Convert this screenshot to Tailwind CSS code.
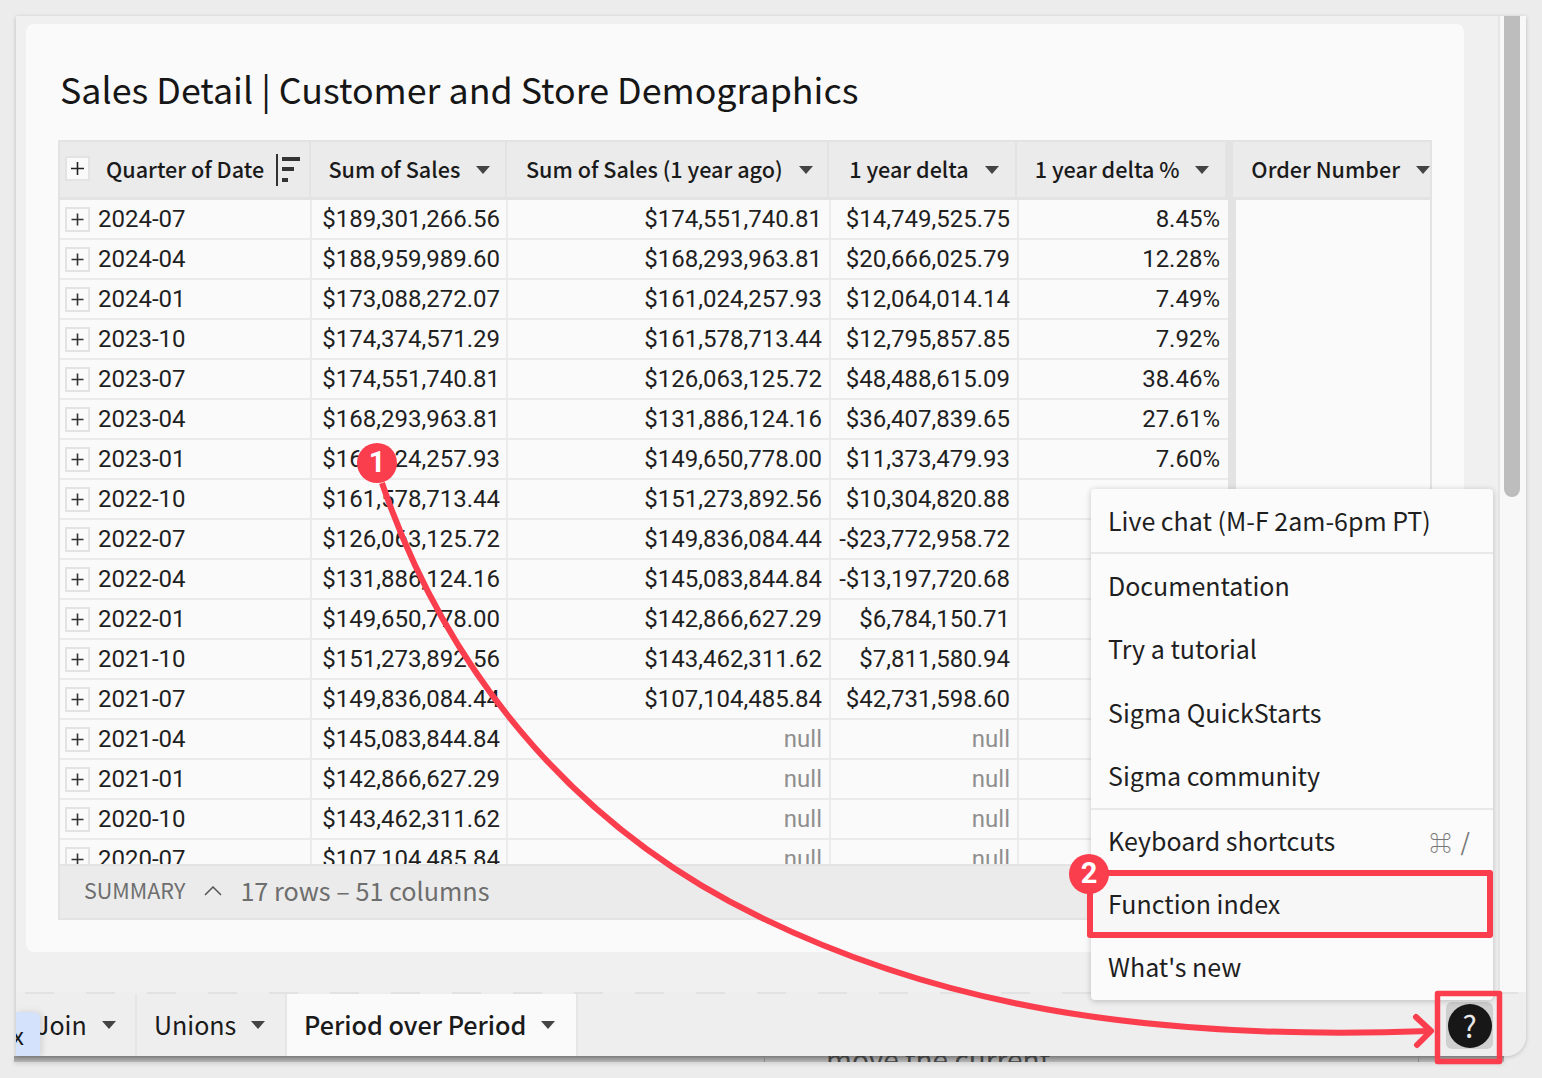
<!DOCTYPE html>
<html lang="en">
<head>
    <meta charset="UTF-8">
    <title>Sales Detail</title>
    <script src="https://cdn.jsdelivr.net/npm/@tailwindcss/browser@4"></script>
</head>
<body class="relative w-[1542px] h-[1078px] overflow-hidden bg-[#ececec] font-['Noto_Sans_CJK_SC','Noto_Sans',sans-serif] text-[#1a1a1a]">

<!-- page text peeking out below the window -->
<div class="absolute left-[14px] top-[1056px] h-[6px] w-[1490px] overflow-hidden bg-gradient-to-b from-[#8f8f8f] to-[#b5b5b5] shadow-[0_2px_4px_rgba(0,0,0,0.12)]">
    <div class="absolute left-[750px] top-0 h-[6px] w-px bg-[#888]"></div>
    <div class="absolute left-[1404px] top-0 h-[6px] w-px bg-[#888]"></div>
    <div class="absolute left-[812px] -top-[18px] whitespace-nowrap text-[28px] leading-[40px] text-[#444]">move the current</div>
</div>

<!-- app window -->
<div class="relative ml-4 mt-4 w-[1510px] h-[1040px] overflow-hidden rounded-br-[20px] bg-[#f0f0f0] shadow-[0_1px_4px_rgba(0,0,0,0.2)]">
    <div class="flex h-[976px]">
        <div class="w-[1482px] pl-[10px] pt-2">
            <section class="w-[1438px] h-[928px] rounded-lg bg-[#fafafa] pt-[33px] pl-[32px]">
                <h1 class="ml-[2px] h-[83px] text-[35.800px] leading-[62px] text-[#161616]">Sales Detail | Customer and Store Demographics</h1>

                <div class="relative w-[1374px] h-[780px] overflow-hidden border-2 border-[#e3e3e3]">
                    <!-- header -->
                    <div class="flex h-[58px] whitespace-nowrap border-b-[3px] border-[#e3e3e3] bg-[#ebebeb] text-[21.600px] font-medium">
                        <div class="flex w-[252px] items-center border-r-2 border-[#e3e3e3] pl-[5px]">
                            <span class="mb-[3px] flex h-[25px] w-[25px] items-center justify-center border-2 border-[#e3e3e3] bg-[#fafafa]"><svg width="15" height="15" viewBox="0 0 15 15"><path d="M7.500 1v13M1 7.500h13" stroke="#222" stroke-width="1.600"/></svg></span>
                            <span class="ml-[16px]">Quarter of Date</span>
                            <svg class="ml-[12px]" width="26" height="34" viewBox="0 0 26 34"><path d="M1 1v32" stroke="#333" stroke-width="2"/><path d="M6 4h18v4H6zM6 14h12v4H6zM6 25h6v4H6z" fill="#333"/></svg>
                        </div>
                        <div class="flex w-[196px] items-center border-r-2 border-[#e3e3e3] pl-[17px]"><span>Sum of Sales</span><svg class="ml-[16px]" width="14" height="8"><path d="M0 0h14L7 8z" fill="#444"/></svg></div>
                        <div class="flex w-[323px] items-center border-r-2 border-[#e3e3e3] pl-[19px]"><span>Sum of Sales (1 year ago)</span><svg class="ml-[16px]" width="14" height="8"><path d="M0 0h14L7 8z" fill="#444"/></svg></div>
                        <div class="flex w-[188px] items-center border-r-2 border-[#e3e3e3] pl-[20px]"><span>1 year delta</span><svg class="ml-[16px]" width="14" height="8"><path d="M0 0h14L7 8z" fill="#444"/></svg></div>
                        <div class="flex w-[209px] items-center pl-[18px]"><span>1 year delta %</span><svg class="ml-[16px]" width="14" height="8"><path d="M0 0h14L7 8z" fill="#444"/></svg></div>
                        <div class="-mb-[3px] w-2 shrink-0 bg-[#e3e3e3]"></div>
                        <div class="flex flex-1 items-center pl-[18px]"><span>Order Number</span><svg class="ml-[16px]" width="14" height="8"><path d="M0 0h14L7 8z" fill="#444"/></svg></div>
                    </div>

                    <!-- rows -->
                    <div class="flex font-['Roboto',sans-serif] text-[24px] leading-[38px] text-[#1f1f1f]">
                        <div class="w-[1168px]">
                            <div class="flex h-10 border-b-2 border-[#ebebeb]"><div class="flex w-[252px] items-center border-r-2 border-[#ebebeb] pl-[5px]"><span class="flex h-[25px] w-[25px] items-center justify-center border-2 border-[#e3e3e3]"><svg width="15" height="15" viewBox="0 0 15 15"><path d="M7.500 1.500v12M1.500 7.500h12" stroke="#333" stroke-width="1.600"/></svg></span><span class="ml-[8px]">2024-07</span></div><div class="w-[196px] border-r-2 border-[#ebebeb] pr-[6px] text-right">$189,301,266.56</div><div class="w-[323px] border-r-2 border-[#ebebeb] pr-[7px] text-right">$174,551,740.81</div><div class="w-[188px] border-r-2 border-[#ebebeb] pr-[7px] text-right">$14,749,525.75</div><div class="w-[209px] pr-[8px] text-right">8.45%</div></div>
                            <div class="flex h-10 border-b-2 border-[#ebebeb]"><div class="flex w-[252px] items-center border-r-2 border-[#ebebeb] pl-[5px]"><span class="flex h-[25px] w-[25px] items-center justify-center border-2 border-[#e3e3e3]"><svg width="15" height="15" viewBox="0 0 15 15"><path d="M7.500 1.500v12M1.500 7.500h12" stroke="#333" stroke-width="1.600"/></svg></span><span class="ml-[8px]">2024-04</span></div><div class="w-[196px] border-r-2 border-[#ebebeb] pr-[6px] text-right">$188,959,989.60</div><div class="w-[323px] border-r-2 border-[#ebebeb] pr-[7px] text-right">$168,293,963.81</div><div class="w-[188px] border-r-2 border-[#ebebeb] pr-[7px] text-right">$20,666,025.79</div><div class="w-[209px] pr-[8px] text-right">12.28%</div></div>
                            <div class="flex h-10 border-b-2 border-[#ebebeb]"><div class="flex w-[252px] items-center border-r-2 border-[#ebebeb] pl-[5px]"><span class="flex h-[25px] w-[25px] items-center justify-center border-2 border-[#e3e3e3]"><svg width="15" height="15" viewBox="0 0 15 15"><path d="M7.500 1.500v12M1.500 7.500h12" stroke="#333" stroke-width="1.600"/></svg></span><span class="ml-[8px]">2024-01</span></div><div class="w-[196px] border-r-2 border-[#ebebeb] pr-[6px] text-right">$173,088,272.07</div><div class="w-[323px] border-r-2 border-[#ebebeb] pr-[7px] text-right">$161,024,257.93</div><div class="w-[188px] border-r-2 border-[#ebebeb] pr-[7px] text-right">$12,064,014.14</div><div class="w-[209px] pr-[8px] text-right">7.49%</div></div>
                            <div class="flex h-10 border-b-2 border-[#ebebeb]"><div class="flex w-[252px] items-center border-r-2 border-[#ebebeb] pl-[5px]"><span class="flex h-[25px] w-[25px] items-center justify-center border-2 border-[#e3e3e3]"><svg width="15" height="15" viewBox="0 0 15 15"><path d="M7.500 1.500v12M1.500 7.500h12" stroke="#333" stroke-width="1.600"/></svg></span><span class="ml-[8px]">2023-10</span></div><div class="w-[196px] border-r-2 border-[#ebebeb] pr-[6px] text-right">$174,374,571.29</div><div class="w-[323px] border-r-2 border-[#ebebeb] pr-[7px] text-right">$161,578,713.44</div><div class="w-[188px] border-r-2 border-[#ebebeb] pr-[7px] text-right">$12,795,857.85</div><div class="w-[209px] pr-[8px] text-right">7.92%</div></div>
                            <div class="flex h-10 border-b-2 border-[#ebebeb]"><div class="flex w-[252px] items-center border-r-2 border-[#ebebeb] pl-[5px]"><span class="flex h-[25px] w-[25px] items-center justify-center border-2 border-[#e3e3e3]"><svg width="15" height="15" viewBox="0 0 15 15"><path d="M7.500 1.500v12M1.500 7.500h12" stroke="#333" stroke-width="1.600"/></svg></span><span class="ml-[8px]">2023-07</span></div><div class="w-[196px] border-r-2 border-[#ebebeb] pr-[6px] text-right">$174,551,740.81</div><div class="w-[323px] border-r-2 border-[#ebebeb] pr-[7px] text-right">$126,063,125.72</div><div class="w-[188px] border-r-2 border-[#ebebeb] pr-[7px] text-right">$48,488,615.09</div><div class="w-[209px] pr-[8px] text-right">38.46%</div></div>
                            <div class="flex h-10 border-b-2 border-[#ebebeb]"><div class="flex w-[252px] items-center border-r-2 border-[#ebebeb] pl-[5px]"><span class="flex h-[25px] w-[25px] items-center justify-center border-2 border-[#e3e3e3]"><svg width="15" height="15" viewBox="0 0 15 15"><path d="M7.500 1.500v12M1.500 7.500h12" stroke="#333" stroke-width="1.600"/></svg></span><span class="ml-[8px]">2023-04</span></div><div class="w-[196px] border-r-2 border-[#ebebeb] pr-[6px] text-right">$168,293,963.81</div><div class="w-[323px] border-r-2 border-[#ebebeb] pr-[7px] text-right">$131,886,124.16</div><div class="w-[188px] border-r-2 border-[#ebebeb] pr-[7px] text-right">$36,407,839.65</div><div class="w-[209px] pr-[8px] text-right">27.61%</div></div>
                            <div class="flex h-10 border-b-2 border-[#ebebeb]"><div class="flex w-[252px] items-center border-r-2 border-[#ebebeb] pl-[5px]"><span class="flex h-[25px] w-[25px] items-center justify-center border-2 border-[#e3e3e3]"><svg width="15" height="15" viewBox="0 0 15 15"><path d="M7.500 1.500v12M1.500 7.500h12" stroke="#333" stroke-width="1.600"/></svg></span><span class="ml-[8px]">2023-01</span></div><div class="w-[196px] border-r-2 border-[#ebebeb] pr-[6px] text-right">$161,024,257.93</div><div class="w-[323px] border-r-2 border-[#ebebeb] pr-[7px] text-right">$149,650,778.00</div><div class="w-[188px] border-r-2 border-[#ebebeb] pr-[7px] text-right">$11,373,479.93</div><div class="w-[209px] pr-[8px] text-right">7.60%</div></div>
                            <div class="flex h-10 border-b-2 border-[#ebebeb]"><div class="flex w-[252px] items-center border-r-2 border-[#ebebeb] pl-[5px]"><span class="flex h-[25px] w-[25px] items-center justify-center border-2 border-[#e3e3e3]"><svg width="15" height="15" viewBox="0 0 15 15"><path d="M7.500 1.500v12M1.500 7.500h12" stroke="#333" stroke-width="1.600"/></svg></span><span class="ml-[8px]">2022-10</span></div><div class="w-[196px] border-r-2 border-[#ebebeb] pr-[6px] text-right">$161,578,713.44</div><div class="w-[323px] border-r-2 border-[#ebebeb] pr-[7px] text-right">$151,273,892.56</div><div class="w-[188px] border-r-2 border-[#ebebeb] pr-[7px] text-right">$10,304,820.88</div><div class="w-[209px]"></div></div>
                            <div class="flex h-10 border-b-2 border-[#ebebeb]"><div class="flex w-[252px] items-center border-r-2 border-[#ebebeb] pl-[5px]"><span class="flex h-[25px] w-[25px] items-center justify-center border-2 border-[#e3e3e3]"><svg width="15" height="15" viewBox="0 0 15 15"><path d="M7.500 1.500v12M1.500 7.500h12" stroke="#333" stroke-width="1.600"/></svg></span><span class="ml-[8px]">2022-07</span></div><div class="w-[196px] border-r-2 border-[#ebebeb] pr-[6px] text-right">$126,063,125.72</div><div class="w-[323px] border-r-2 border-[#ebebeb] pr-[7px] text-right">$149,836,084.44</div><div class="w-[188px] border-r-2 border-[#ebebeb] pr-[7px] text-right">-$23,772,958.72</div><div class="w-[209px]"></div></div>
                            <div class="flex h-10 border-b-2 border-[#ebebeb]"><div class="flex w-[252px] items-center border-r-2 border-[#ebebeb] pl-[5px]"><span class="flex h-[25px] w-[25px] items-center justify-center border-2 border-[#e3e3e3]"><svg width="15" height="15" viewBox="0 0 15 15"><path d="M7.500 1.500v12M1.500 7.500h12" stroke="#333" stroke-width="1.600"/></svg></span><span class="ml-[8px]">2022-04</span></div><div class="w-[196px] border-r-2 border-[#ebebeb] pr-[6px] text-right">$131,886,124.16</div><div class="w-[323px] border-r-2 border-[#ebebeb] pr-[7px] text-right">$145,083,844.84</div><div class="w-[188px] border-r-2 border-[#ebebeb] pr-[7px] text-right">-$13,197,720.68</div><div class="w-[209px]"></div></div>
                            <div class="flex h-10 border-b-2 border-[#ebebeb]"><div class="flex w-[252px] items-center border-r-2 border-[#ebebeb] pl-[5px]"><span class="flex h-[25px] w-[25px] items-center justify-center border-2 border-[#e3e3e3]"><svg width="15" height="15" viewBox="0 0 15 15"><path d="M7.500 1.500v12M1.500 7.500h12" stroke="#333" stroke-width="1.600"/></svg></span><span class="ml-[8px]">2022-01</span></div><div class="w-[196px] border-r-2 border-[#ebebeb] pr-[6px] text-right">$149,650,778.00</div><div class="w-[323px] border-r-2 border-[#ebebeb] pr-[7px] text-right">$142,866,627.29</div><div class="w-[188px] border-r-2 border-[#ebebeb] pr-[7px] text-right">$6,784,150.71</div><div class="w-[209px]"></div></div>
                            <div class="flex h-10 border-b-2 border-[#ebebeb]"><div class="flex w-[252px] items-center border-r-2 border-[#ebebeb] pl-[5px]"><span class="flex h-[25px] w-[25px] items-center justify-center border-2 border-[#e3e3e3]"><svg width="15" height="15" viewBox="0 0 15 15"><path d="M7.500 1.500v12M1.500 7.500h12" stroke="#333" stroke-width="1.600"/></svg></span><span class="ml-[8px]">2021-10</span></div><div class="w-[196px] border-r-2 border-[#ebebeb] pr-[6px] text-right">$151,273,892.56</div><div class="w-[323px] border-r-2 border-[#ebebeb] pr-[7px] text-right">$143,462,311.62</div><div class="w-[188px] border-r-2 border-[#ebebeb] pr-[7px] text-right">$7,811,580.94</div><div class="w-[209px]"></div></div>
                            <div class="flex h-10 border-b-2 border-[#ebebeb]"><div class="flex w-[252px] items-center border-r-2 border-[#ebebeb] pl-[5px]"><span class="flex h-[25px] w-[25px] items-center justify-center border-2 border-[#e3e3e3]"><svg width="15" height="15" viewBox="0 0 15 15"><path d="M7.500 1.500v12M1.500 7.500h12" stroke="#333" stroke-width="1.600"/></svg></span><span class="ml-[8px]">2021-07</span></div><div class="w-[196px] border-r-2 border-[#ebebeb] pr-[6px] text-right">$149,836,084.44</div><div class="w-[323px] border-r-2 border-[#ebebeb] pr-[7px] text-right">$107,104,485.84</div><div class="w-[188px] border-r-2 border-[#ebebeb] pr-[7px] text-right">$42,731,598.60</div><div class="w-[209px]"></div></div>
                            <div class="flex h-10 border-b-2 border-[#ebebeb]"><div class="flex w-[252px] items-center border-r-2 border-[#ebebeb] pl-[5px]"><span class="flex h-[25px] w-[25px] items-center justify-center border-2 border-[#e3e3e3]"><svg width="15" height="15" viewBox="0 0 15 15"><path d="M7.500 1.500v12M1.500 7.500h12" stroke="#333" stroke-width="1.600"/></svg></span><span class="ml-[8px]">2021-04</span></div><div class="w-[196px] border-r-2 border-[#ebebeb] pr-[6px] text-right">$145,083,844.84</div><div class="w-[323px] border-r-2 border-[#ebebeb] pr-[7px] text-right text-[#8f8f8f]">null</div><div class="w-[188px] border-r-2 border-[#ebebeb] pr-[7px] text-right text-[#8f8f8f]">null</div><div class="w-[209px]"></div></div>
                            <div class="flex h-10 border-b-2 border-[#ebebeb]"><div class="flex w-[252px] items-center border-r-2 border-[#ebebeb] pl-[5px]"><span class="flex h-[25px] w-[25px] items-center justify-center border-2 border-[#e3e3e3]"><svg width="15" height="15" viewBox="0 0 15 15"><path d="M7.500 1.500v12M1.500 7.500h12" stroke="#333" stroke-width="1.600"/></svg></span><span class="ml-[8px]">2021-01</span></div><div class="w-[196px] border-r-2 border-[#ebebeb] pr-[6px] text-right">$142,866,627.29</div><div class="w-[323px] border-r-2 border-[#ebebeb] pr-[7px] text-right text-[#8f8f8f]">null</div><div class="w-[188px] border-r-2 border-[#ebebeb] pr-[7px] text-right text-[#8f8f8f]">null</div><div class="w-[209px]"></div></div>
                            <div class="flex h-10 border-b-2 border-[#ebebeb]"><div class="flex w-[252px] items-center border-r-2 border-[#ebebeb] pl-[5px]"><span class="flex h-[25px] w-[25px] items-center justify-center border-2 border-[#e3e3e3]"><svg width="15" height="15" viewBox="0 0 15 15"><path d="M7.500 1.500v12M1.500 7.500h12" stroke="#333" stroke-width="1.600"/></svg></span><span class="ml-[8px]">2020-10</span></div><div class="w-[196px] border-r-2 border-[#ebebeb] pr-[6px] text-right">$143,462,311.62</div><div class="w-[323px] border-r-2 border-[#ebebeb] pr-[7px] text-right text-[#8f8f8f]">null</div><div class="w-[188px] border-r-2 border-[#ebebeb] pr-[7px] text-right text-[#8f8f8f]">null</div><div class="w-[209px]"></div></div>
                            <div class="flex h-10 border-b-2 border-[#ebebeb]"><div class="flex w-[252px] items-center border-r-2 border-[#ebebeb] pl-[5px]"><span class="flex h-[25px] w-[25px] items-center justify-center border-2 border-[#e3e3e3]"><svg width="15" height="15" viewBox="0 0 15 15"><path d="M7.500 1.500v12M1.500 7.500h12" stroke="#333" stroke-width="1.600"/></svg></span><span class="ml-[8px]">2020-07</span></div><div class="w-[196px] border-r-2 border-[#ebebeb] pr-[6px] text-right">$107,104,485.84</div><div class="w-[323px] border-r-2 border-[#ebebeb] pr-[7px] text-right text-[#8f8f8f]">null</div><div class="w-[188px] border-r-2 border-[#ebebeb] pr-[7px] text-right text-[#8f8f8f]">null</div><div class="w-[209px]"></div></div>
                        </div>
                        <div class="w-2 h-[660px] shrink-0 bg-[#e3e3e3]"></div>
                    </div>

                    <!-- summary bar sits over the cut-off last row -->
                    <div class="absolute bottom-0 left-0 right-0 flex h-[54px] items-center border-t-2 border-[#e3e3e3] bg-[#ebebeb] pb-[3px] pl-[24px] text-[#6e6e6e]">
                        <span class="text-[21.500px]">SUMMARY</span>
                        <svg class="ml-[19px]" width="18" height="10" viewBox="0 0 18 10"><path d="M1 9l8-8 8 8" fill="none" stroke="#555" stroke-width="1.500"/></svg>
                        <span class="ml-[18px] text-[25.200px]">17 rows – 51 columns</span>
                    </div>
                </div>
            </section>
        </div>
        <!-- scrollbar -->
        <div class="w-7 border-l-2 border-[#e6e6e6] bg-[#f8f8f8] pl-[4px]">
            <div class="h-[481px] w-4 rounded-b-lg bg-[#bdbdbd]"></div>
        </div>
    </div>

    <!-- sheet tabs -->
    <div class="h-[64px] bg-[#eeeeee]">
        <div class="h-[2px] bg-[repeating-linear-gradient(90deg,#e2e2e2_0_29px,transparent_29px_61px)] bg-[position:9px_0]"></div>
        <div class="flex h-[62px] items-stretch text-[25px]">
            <div class="flex w-[121px] items-center border-r-2 border-[#e6e6e6] pl-[20px]"><span>Join</span><svg class="ml-[15px]" width="14" height="8"><path d="M0 0h14L7 8z" fill="#444"/></svg></div>
            <div class="flex w-[150px] items-center border-r-2 border-[#e6e6e6] pl-[17px]"><span>Unions</span><svg class="ml-[15px]" width="14" height="8"><path d="M0 0h14L7 8z" fill="#444"/></svg></div>
            <div class="flex w-[291px] items-center border-r-2 border-[#e6e6e6] bg-[#fafafa] pl-[17px] font-medium"><span class="text-[25.200px]">Period over Period</span><svg class="ml-[15px]" width="14" height="8"><path d="M0 0h14L7 8z" fill="#444"/></svg></div>
        </div>
    </div>

    <!-- blue chip cut off at the window edge -->
    <div class="absolute bottom-0 left-0 h-[44px] w-[24px] overflow-hidden rounded-tr-md bg-[#d4e2fb] text-[24px] leading-[46px] shadow-[2px_0_6px_rgba(0,0,0,0.12)]"><span class="-ml-[4px]">x</span></div>

    <!-- help button -->
    <div class="absolute bottom-[7px] right-[33px] flex h-[47px] w-[47px] items-center justify-center rounded-md bg-[#cfcfcf]">
        <div class="flex h-11 w-11 items-center justify-center rounded-full bg-[#171717] pb-[1px] text-[30px] text-[#e8e8e8]">?</div>
    </div>

    <!-- help menu -->
    <div class="absolute left-[1075px] top-[473px] w-[402px] rounded-sm bg-[#fbfbfb] text-[25px] leading-[40px] text-[#1f1f1f] shadow-[0_1px_6px_rgba(0,0,0,0.22)]">
        <div class="h-[65px] border-b-2 border-[#e8e8e8] px-[17px] pt-[11px]">Live chat (M-F 2am-6pm PT)</div>
        <div class="flex h-[256px] flex-col gap-[23.400px] border-b-2 border-[#e8e8e8] px-[17px] pt-[11px]">
            <div>Documentation</div>
            <div>Try a tutorial</div>
            <div>Sigma QuickStarts</div>
            <div>Sigma community</div>
        </div>
        <div class="flex h-[62px] justify-between pl-[17px] pr-[23px] pt-[10px]"><span>Keyboard shortcuts</span><span class="text-[#777]"><span class="text-[22px] font-medium">⌘</span><span class="ml-[9px] text-[24px]">/</span></span></div>
        <div class="h-[63px] bg-[#f7f7f7] px-[17px] pt-[11px]">Function index</div>
        <div class="h-[65px] px-[17px] pt-[11px]">What's new</div>
    </div>
</div>

<!-- annotations -->
<svg class="absolute inset-0" width="1542" height="1078" viewBox="0 0 1542 1078" fill="none">
    <path d="M382 483C452 688 590 835 760 917C930 1000 1130 1042 1430 1031" stroke="#fb3e4e" stroke-width="6"/>
    <path d="M1416 1017L1431 1031L1417 1045" stroke="#fb3e4e" stroke-width="6" stroke-linecap="round" stroke-linejoin="round"/>
    <rect x="1090" y="873" width="400" height="62" stroke="#fb3e4e" stroke-width="6" stroke-linejoin="round"/>
    <rect x="1437.500" y="993.500" width="62" height="68" stroke="#fb3e4e" stroke-width="5.500" stroke-linejoin="round"/>
</svg>
<div class="absolute left-[357px] top-[443px] flex h-10 w-10 items-center justify-center rounded-full bg-[#fb3e4e] pb-[2px] font-['Roboto',sans-serif] text-[29px] font-bold leading-none text-white">1</div>
<div class="absolute left-[1069px] top-[854px] flex h-10 w-10 items-center justify-center rounded-full bg-[#fb3e4e] pb-[2px] font-['Roboto',sans-serif] text-[29px] font-bold leading-none text-white">2</div>

</body>
</html>
